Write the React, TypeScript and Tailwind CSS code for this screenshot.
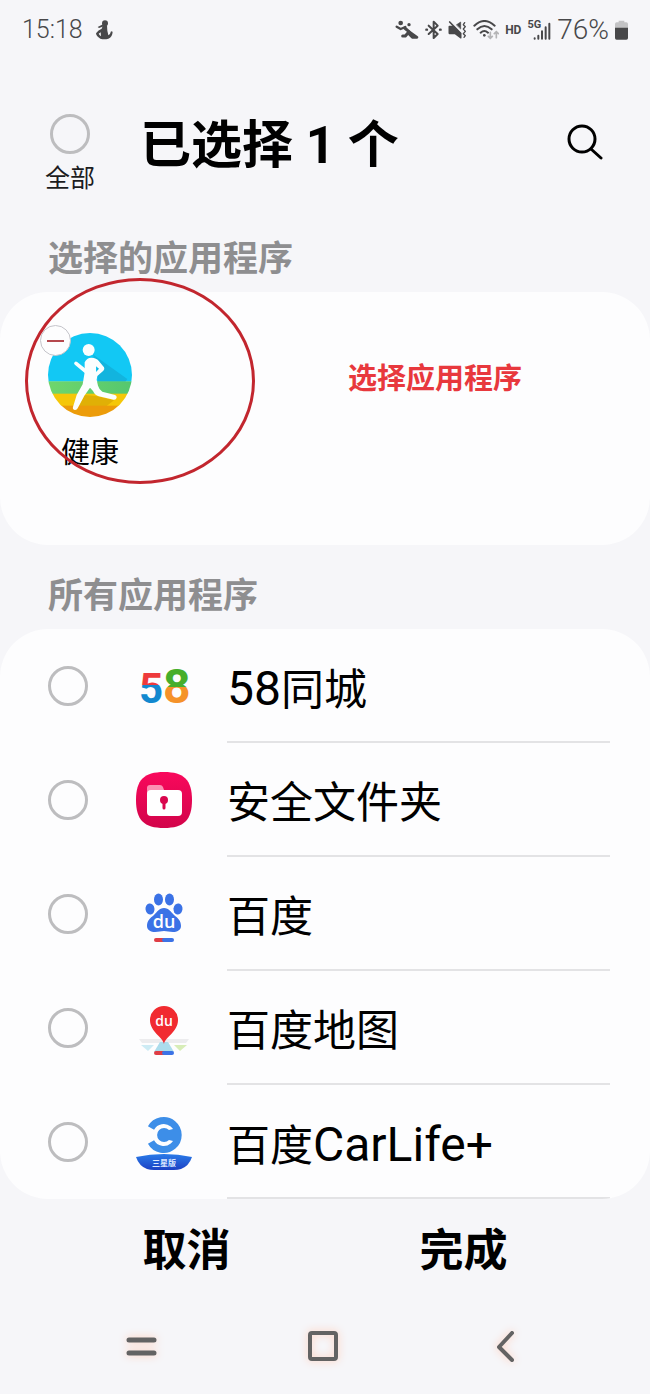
import React, { useState } from 'react';

interface AppItem {
    id: string;
    name: string;
    icon: React.ReactNode;
}

const HealthIcon = () => (
    <svg viewBox="0 0 252 252" className="block size-[84px]" aria-hidden="true">
        <defs>
            <clipPath id="health-clip"><circle cx="126" cy="126" r="126" /></clipPath>
            <linearGradient id="health-green" x1="0" x2="1">
                <stop offset="0" stopColor="#6fd66c" />
                <stop offset="1" stopColor="#55c76e" />
            </linearGradient>
        </defs>
        <g clipPath="url(#health-clip)">
            <rect width="252" height="146" fill="#12c8f4" />
            <path d="M134 64L238 138L232 146L150 146L146 90Z" fill="#12b4de" />
            <rect y="145" width="252" height="38" fill="url(#health-green)" />
            <rect y="182" width="252" height="37" fill="#f5c708" />
            <path d="M88 228L110 186L150 190L198 202L176 219H92Z" fill="#e0b006" />
            <rect y="218" width="252" height="34" fill="#ec9c0a" />
        </g>
        <g fill="#fbfefe">
            <circle cx="122" cy="51" r="18" />
            <path d="M84 91L112 114" stroke="#fbfefe" strokeWidth="11" strokeLinecap="round" />
            <path fillRule="evenodd" d="M110 88Q116 74 130 74Q146 74 153 85L168 103Q171 108 166 113L148 129L146 140L150 158Q153 169 163 176L201 186Q207 188 206 194Q204 201 197 200L152 190Q141 187 135 174L126 164L109 188L89 226Q86 232 80 231Q73 229 75 222L86 186L104 154L110 118ZM144 100V117L153 107Z" />
        </g>
    </svg>
);

const TongchengIcon = () => (
    <svg viewBox="0 0 56 56" className="size-14 overflow-visible" aria-hidden="true">
        <defs>
            <linearGradient id="five" x1="0" y1="15" x2="0" y2="46" gradientUnits="userSpaceOnUse">
                <stop offset="0.4" stopColor="#ee3a3c" />
                <stop offset="0.4" stopColor="#1388cf" />
            </linearGradient>
            <linearGradient id="eight" x1="0" y1="10" x2="0" y2="47" gradientUnits="userSpaceOnUse">
                <stop offset="0.5" stopColor="#46ae2c" />
                <stop offset="0.5" stopColor="#f5922a" />
            </linearGradient>
        </defs>
        <text x="3" y="45" fontFamily="Roboto, sans-serif" fontWeight="700">
            <tspan fontSize="42" fill="url(#five)">5</tspan>
            <tspan fontSize="48" fill="url(#eight)">8</tspan>
        </text>
    </svg>
);

const SecureFolderIcon = () => (
    <svg viewBox="0 0 56 56" className="size-14" aria-hidden="true">
        <defs>
            <linearGradient id="folder-bg" x1="0" y1="0" x2="0" y2="1">
                <stop offset="0" stopColor="#f9085c" />
                <stop offset="1" stopColor="#d2044a" />
            </linearGradient>
        </defs>
        <path d="M28 0C48 0 56 8 56 28S48 56 28 56S0 48 0 28S8 0 28 0Z" fill="url(#folder-bg)" />
        <path d="M11 19V16Q11 13 14 13H24Q26 13 27 15L28 18V24H11Z" fill="#fb8fb2" />
        <rect x="11" y="18" width="35" height="26" rx="4" fill="#fff" />
        <circle cx="28" cy="28" r="4" fill="#d9064d" />
        <path d="M28 29V36" stroke="#d9064d" strokeWidth="3" strokeLinecap="round" />
    </svg>
);

const BaiduIcon = () => (
    <svg viewBox="0 0 56 56" className="size-14" aria-hidden="true">
        <g fill="#3b72e6">
            <ellipse cx="14" cy="23" rx="4.5" ry="5.5" transform="rotate(-10 14 23)" />
            <ellipse cx="22.5" cy="13.5" rx="4.5" ry="6" />
            <ellipse cx="33.5" cy="13.5" rx="4.5" ry="6" />
            <ellipse cx="42" cy="23" rx="4.5" ry="5.5" transform="rotate(10 42 23)" />
            <path d="M28 22C33 22 35 26 38 29C42 32 45 35 45 40C45 44 41 46 37 46C33 46 31 45 28 45S23 46 19 46C15 46 11 44 11 40C11 35 14 32 18 29C21 26 23 22 28 22Z" />
        </g>
        <text x="28" y="42" textAnchor="middle" fontFamily="Open Sans, sans-serif" fontWeight="600" fontSize="18" fill="#fff">du</text>
        <path d="M20 54H28" stroke="#df3d45" strokeWidth="4" strokeLinecap="round" />
        <path d="M28 54H36" stroke="#3b72e6" strokeWidth="4" strokeLinecap="round" />
    </svg>
);

const BaiduMapIcon = () => (
    <svg viewBox="0 0 56 56" className="size-14" aria-hidden="true">
        <path d="M3 39H53L50 43H6Z" fill="#ececee" />
        <path d="M5 45H18L12 51Z" fill="#cdebf4" />
        <path d="M38 45H51L44 51Z" fill="#d7edb8" />
        <path d="M24 42H32L38 52H18Z" fill="#abdcec" />
        <path d="M28 44C27 37 14 32 14 20A13.5 13.5 0 0 1 42 20C42 32 29 37 28 44Z" fill="#f12b30" />
        <text x="28" y="26" textAnchor="middle" fontFamily="Open Sans, sans-serif" fontWeight="600" fontSize="14" fill="#fff">du</text>
        <path d="M20 53H28" stroke="#df3d45" strokeWidth="4" strokeLinecap="round" />
        <path d="M28 53H36" stroke="#3b72e6" strokeWidth="4" strokeLinecap="round" />
    </svg>
);

const CarLifeIcon = () => (
    <svg viewBox="0 0 56 56" className="size-14" aria-hidden="true">
        <defs>
            <linearGradient id="carlife-base" x1="0" y1="0" x2="0" y2="1">
                <stop offset="0" stopColor="#2a7be8" />
                <stop offset="1" stopColor="#1c41c4" />
            </linearGradient>
        </defs>
        <path d="M15 14A14.5 14.5 0 1 1 15 28" fill="none" stroke="#3d8ee8" strokeWidth="7" />
        <path d="M33 16A7 7 0 1 0 33 26L41 28V14Z" fill="#3d8ee8" />
        <path d="M0 43Q28 37 56 43Q53 52 45 55Q42 56 38 56H18Q14 56 11 55Q3 52 0 43Z" fill="url(#carlife-base)" />
        <text x="28" y="52" textAnchor="middle" fontFamily="Noto Sans CJK SC, sans-serif" fontWeight="700" fontSize="8" fill="#dce8ff">三星版</text>
    </svg>
);

const apps: AppItem[] = [
    { id: 'tongcheng', name: '58同城', icon: <TongchengIcon /> },
    { id: 'secure-folder', name: '安全文件夹', icon: <SecureFolderIcon /> },
    { id: 'baidu', name: '百度', icon: <BaiduIcon /> },
    { id: 'baidu-map', name: '百度地图', icon: <BaiduMapIcon /> },
    { id: 'carlife', name: '百度CarLife+', icon: <CarLifeIcon /> },
];

const StatusBar = () => (
    <div className="flex h-[60px] items-center justify-between px-[22px] text-[#48484a]">
        <div className="flex items-center gap-3">
            <span className="text-[25px] leading-[30px] font-light">15:18</span>
            <svg viewBox="0 0 54 60" className="h-5 w-[18px]" fill="currentColor" aria-hidden="true">
                <circle cx="30" cy="10" r="9" />
                <path d="M8 21L24 13L27 19L12 24Z" />
                <path fillRule="evenodd" d="M24 16H36L37 32Q39 40 40 46Q46 44 48 34L53 35Q52 52 40 56Q28 60 16 56Q3 48 3 40Q10 30 20 26ZM11 41Q14 46 18 49L17 37Z" />
            </svg>
        </div>
        <div className="flex items-center gap-1.5">
            <svg viewBox="0 0 72 60" className="h-5 w-6" fill="none" stroke="currentColor" strokeLinecap="round" strokeLinejoin="round" aria-hidden="true">
                <circle cx="17" cy="9" r="7" fill="currentColor" stroke="none" />
                <path d="M5 20L17 27L31 21" strokeWidth="7" />
                <circle cx="42" cy="14" r="5" fill="currentColor" stroke="none" />
                <path d="M29 24L42 35L31 48L23 48" strokeWidth="9" />
                <path d="M42 35L66 52H52L43 43" strokeWidth="8" fill="currentColor" />
            </svg>
            <svg viewBox="0 0 51 60" className="h-5 w-[17px]" fill="none" stroke="currentColor" strokeWidth="6" strokeLinecap="round" strokeLinejoin="round" aria-hidden="true">
                <path d="M11 17L38 42L26 54V5L38 17L11 42" />
                <path d="M4 29H6M45 29H47" strokeWidth="7" />
            </svg>
            <svg viewBox="0 0 57 60" className="h-5 w-[19px]" fill="none" stroke="currentColor" strokeWidth="5" strokeLinecap="round" strokeLinejoin="round" aria-hidden="true">
                <path d="M4 20H16L38 42V53L21 40H4Z" fill="currentColor" />
                <path d="M26 14L38 6V26Z" fill="currentColor" strokeWidth="2" />
                <path d="M5 6L38 40" />
                <path d="M50 8L46 14L52 20L46 27L52 34L46 41L52 47L48 52" strokeWidth="4" />
            </svg>
            <svg viewBox="0 0 78 60" className="h-5 w-[26px]" fill="none" stroke="currentColor" strokeWidth="6" strokeLinecap="round" aria-hidden="true">
                <path d="M4 17Q34 -11 65 17M13 28Q34 8 56 28M23 38Q34 28 45 38" />
                <circle cx="34" cy="46" r="4" fill="currentColor" stroke="none" />
                <path d="M52 37V54M46 49L52 55L58 49M70 53V36M64 41L70 35L76 41" stroke="#b4b4b6" strokeWidth="5" />
            </svg>
            <span className="text-[12px] leading-5 font-bold">HD</span>
            <div className="flex h-5 items-start">
                <span className="text-[11px] leading-[10px] font-bold">5G</span>
                <svg viewBox="0 0 54 60" className="-ml-2 h-5 w-[18px]" stroke="currentColor" strokeWidth="6" strokeLinecap="round" aria-hidden="true">
                    <path d="M5 55V56M16 47V56M27 34V56M38 22V56M49 11V56" />
                </svg>
            </div>
            <span className="text-[28px] leading-[30px] font-light">76%</span>
            <svg viewBox="0 0 39 60" className="h-5 w-[13px]" aria-hidden="true">
                <path d="M11 2H28V7H34Q39 7 39 12V24H0V12Q0 7 5 7H11Z" fill="#c3c3c5" />
                <path d="M0 23H39V54Q39 59 34 59H5Q0 59 0 54Z" fill="currentColor" />
            </svg>
        </div>
    </div>
);

const Circle = ({ id, checked, onChange }: { id: string, checked: boolean, onChange: () => void }) => (
    <input
        type="checkbox"
        id={id}
        checked={checked}
        onChange={onChange}
        className="block size-10 shrink-0 cursor-pointer appearance-none rounded-full border-3 border-[#bdbdbf] checked:border-[#3b72e6] checked:bg-[#3b72e6]"
    />
);

const SectionTitle = ({ children }: { children: React.ReactNode }) => (
    <h2 className="px-12 pt-8 pb-3 text-[35px] leading-10 font-bold text-[#8e8e90]">{children}</h2>
);

// Latin runs are set larger than the Chinese characters next to them
const AppName = ({ name }: { name: string }) => (
    <span>
        {name.split(/([\x20-\x7e]+)/).filter(Boolean).map((part, i) => (
            /^[\x20-\x7e]/.test(part) ? <span key={i} className="text-[48px]">{part}</span> : part
        ))}
    </span>
);

const App = () => {
    const [selected, setSelected] = useState<string[]>([]);

    const toggle = (id: string) => {
        setSelected(selected.includes(id) ? selected.filter(x => x !== id) : [...selected, id]);
    }
    const toggleAll = () => {
        setSelected(selected.length === apps.length ? [] : apps.map(app => app.id));
    }

    return (
        <div className="min-h-screen bg-[#f6f6f9] font-[Roboto,'Noto_Sans_CJK_SC',sans-serif] text-black">
            <StatusBar />

            <header className="flex items-start pt-[54px] pr-[47px] pb-3.5 pl-[45px]">
                <div className="flex flex-col items-center gap-2.5">
                    <Circle id="all" checked={selected.length === apps.length} onChange={toggleAll} />
                    <label htmlFor="all" className="text-[25px] leading-[30px] text-[#1c1c1e]">全部</label>
                </div>
                <h1 className="mt-0.5 ml-[45px] flex-1 text-[51px] leading-[60px] font-bold">已选择 {selected.length + 1} 个</h1>
                <button type="button" aria-label="搜索" className="mt-2.5 cursor-pointer">
                    <svg viewBox="0 0 36 36" className="size-9" fill="none" stroke="currentColor" strokeWidth="3" strokeLinecap="round">
                        <circle cx="15" cy="15" r="13" />
                        <path d="M24 25L34 34" />
                    </svg>
                </button>
            </header>

            <main>
                <SectionTitle>选择的应用程序</SectionTitle>
                <section className="relative flex items-start rounded-[48px] bg-[#fdfdfe] px-12 pt-[41px] pb-[72px]">
                    <div className="relative flex flex-col items-center gap-4">
                        <HealthIcon />
                        <span className="text-[29px] leading-10">健康</span>
                        <button type="button" aria-label="移除健康" className="absolute -top-2 -left-2 flex size-[31px] cursor-pointer items-center justify-center rounded-full border border-[#c4c4ca] bg-[#fdfdfe]">
                            <span className="h-0.5 w-[17px] bg-[#b5484e]" />
                        </button>
                    </div>
                    <p className="ml-[216px] pt-1 text-[29px] leading-[84px] font-bold text-[#e8383d]">选择应用程序</p>
                    <div className="pointer-events-none absolute -top-3.5 left-[25px] h-[206px] w-[230px] rounded-[50%] border-3 border-[#c2262e]" />
                </section>

                <SectionTitle>所有应用程序</SectionTitle>
                <ul className="overflow-hidden rounded-[48px] bg-[#fdfdfe]">
                    {apps.map(app => (
                        <li key={app.id} className="flex h-[114px] items-center pr-10 pl-12">
                            <Circle id={app.id} checked={selected.includes(app.id)} onChange={() => toggle(app.id)} />
                            <label htmlFor={app.id} className="ml-12 flex h-full flex-1 cursor-pointer items-center gap-[35px]">
                                {app.icon}
                                <span className="flex h-full flex-1 items-center border-b-2 border-[#e3e3e5] pt-2 text-[43px] leading-[60px]">
                                    <AppName name={app.name} />
                                </span>
                            </label>
                        </li>
                    ))}
                </ul>
            </main>

            <div className="grid grid-cols-2 px-12 pt-[22px] text-[44px] leading-[60px] font-bold">
                <button type="button" className="cursor-pointer">取消</button>
                <button type="button" className="cursor-pointer">完成</button>
            </div>

            <nav className="grid grid-cols-3 justify-items-center px-[52px] pt-[38px] pb-4 text-[#636363]">
                <button type="button" aria-label="最近" className="cursor-pointer">
                    <svg viewBox="0 0 56 56" className="size-14 drop-shadow-[0_0_4px_#ffccb8]" stroke="currentColor" strokeWidth="5" strokeLinecap="round">
                        <path d="M14 21H39M14 34H39" />
                    </svg>
                </button>
                <button type="button" aria-label="主页" className="cursor-pointer">
                    <svg viewBox="0 0 56 56" className="size-14 drop-shadow-[0_0_4px_#ffccb8]" fill="none" stroke="currentColor" strokeWidth="4">
                        <rect x="13" y="14" width="26" height="26" rx="2" />
                    </svg>
                </button>
                <button type="button" aria-label="返回" className="cursor-pointer">
                    <svg viewBox="0 0 56 56" className="size-14 drop-shadow-[0_0_4px_#ffccb8]" fill="none" stroke="currentColor" strokeWidth="4" strokeLinecap="round" strokeLinejoin="round">
                        <path d="M33 14L20 28L33 41" />
                    </svg>
                </button>
            </nav>
        </div>
    );
}

export default App;
